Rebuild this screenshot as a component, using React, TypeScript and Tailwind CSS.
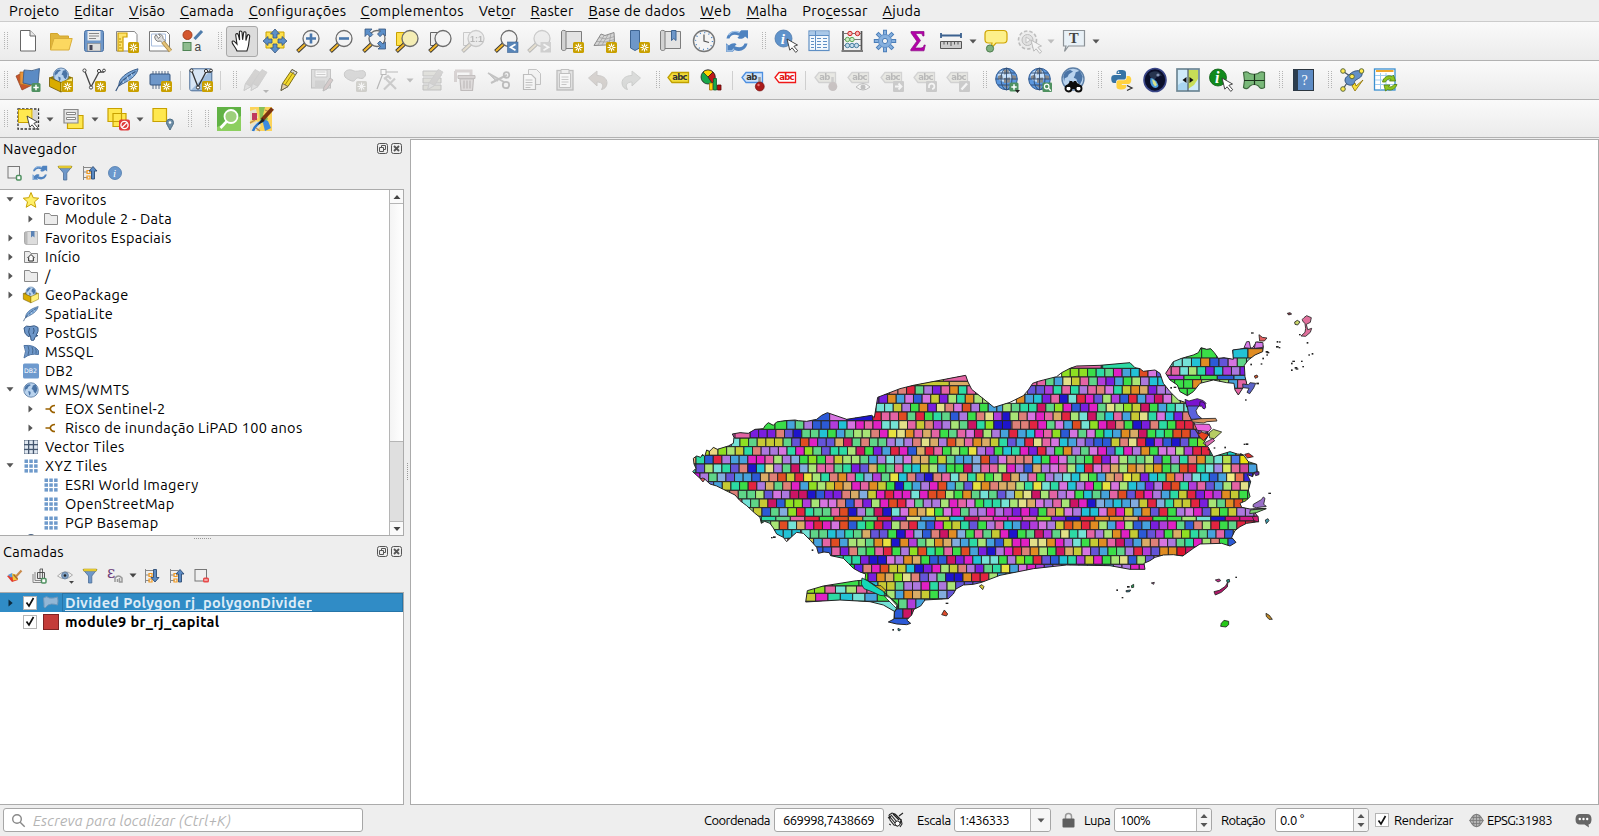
import React, { useLayoutEffect, useRef, useState } from "react";

/* ---------- text ---------- */

/** Text run set to a fixed advance width by distributing letter spacing. */
function T({ w, children, inner = "", className = "" }: { w: number; children: React.ReactNode; inner?: string; className?: string }) {
  const ref = useRef<HTMLSpanElement>(null);
  const [ls, setLs] = useState(0);
  useLayoutEffect(() => {
    const el = ref.current;
    if (!el) return;
    const n = (el.textContent || "").length;
    const natural = el.getBoundingClientRect().width;
    setLs((w - natural) / n);
  }, []);
  return (
    <span className={"block shrink-0 " + className} style={{ width: w }}>
      <span ref={ref} className={"inline-block whitespace-pre " + inner} style={{ letterSpacing: ls }}>
        {children}
      </span>
    </span>
  );
}

/* ---------- icons ---------- */

const S = ({ children, size = 24, dim = false }: { children: React.ReactNode; size?: number; dim?: boolean }) => (
  <svg
    width={size}
    height={size}
    viewBox={`0 0 ${size} ${size}`}
    fill="none"
    className={"shrink-0 overflow-visible " + (dim ? "opacity-30 saturate-[.35]" : "")}
  >
    {children}
  </svg>
);

const Star = ({ x = 13, y = 13 }: { x?: number; y?: number }) => (
  <g transform={`translate(${x} ${y})`}>
    <rect width="11" height="11" rx="1.6" fill="#c9a000" />
    <path d="M5.5 1.5v8M1.5 5.5h8M2.7 2.7l5.6 5.6M8.3 2.7l-5.6 5.6" stroke="#fff" strokeWidth="1.1" />
    <circle cx="5.5" cy="5.5" r="1" fill="#c9a000" />
  </g>
);
const Plus = ({ x = 15, y = 15 }: { x?: number; y?: number }) => (
  <g transform={`translate(${x} ${y})`}>
    <rect width="9" height="9" rx="1.5" fill="#4f9160" />
    <path d="M4.5 1.8v5.4M1.8 4.5h5.4" stroke="#fff" strokeWidth="1.5" />
  </g>
);
const Cursor = ({ x = 12, y = 10 }: { x?: number; y?: number }) => (
  <path
    transform={`translate(${x} ${y})`}
    d="M0 0l2.8 11.2 2.3-2.4 3.6 4.6 2-1.7-3.8-4.4 3.6-1.3z"
    fill="#fff"
    stroke="#333"
    strokeWidth=".9"
  />
);
const Lens = ({ children, fill = "#f3f3f3" }: { children?: React.ReactNode; fill?: string }) => (
  <>
    <path d="M10 14.5L1.5 22.5" stroke="#333" strokeWidth="3.8" />
    <path d="M9 15.5L2 22" stroke="#f0b62c" strokeWidth="2.2" />
    <circle cx="15" cy="9.5" r="8" fill={fill} stroke="#6b6b6b" strokeWidth="1.3" />
    {children}
  </>
);

const NewDoc = () => (
  <S>
    <path d="M4.5 1.5h9.5l5.5 5.5v15h-15z" fill="#fff" stroke="#666" />
    <path d="M14 1.5V7h5.5" fill="#e8e8e8" stroke="#666" />
  </S>
);
const OpenFolder = () => (
  <S>
    <path d="M1.5 21V4.5h7l2 2.5h9v4" fill="#e0b63c" stroke="#d2a52c" />
    <path d="M1.5 21L5 9.5h18.2L20 21z" fill="#fcd860" stroke="#d9ae3a" />
  </S>
);
const Save = () => (
  <S>
    <rect x="2.5" y="1.5" width="19" height="21" rx="2" fill="#6e97c9" stroke="#4c73a5" />
    <path d="M5.5 2h13v9.5h-13z" fill="#eee" />
    <path d="M7 4.5h10M7 7h10M7 9.5h7" stroke="#888" />
    <rect x="5.5" y="14.5" width="13" height="7.5" fill="#ddd" stroke="#888" strokeWidth=".6" />
    <rect x="7.5" y="16" width="3" height="5" fill="#445" />
  </S>
);
const Layout = () => (
  <S>
    <path d="M1.5 2.5h18l2.500 3v16.500h-20.500z" fill="#fff" stroke="#888" />
    <path d="M3 4h9v4H8v14H3z" fill="#ffe46b" stroke="#cf9f00" strokeWidth="1.2" />
    <path d="M4 10h2M4 13h3M4 16h2M4 19h3" stroke="#b58900" />
    <Star />
  </S>
);
const Wrench = () => (
  <S>
    <path d="M1.500 2.500h17l3 3v16.500h-20z" fill="#fff" stroke="#777" />
    <path d="M3.500 5h14v12h-14z" stroke="#a9bede" />
    <path d="M8 5.500a4 4 0 0 0 4.500 6.500l2 2 2.500-2.500-2-2.200A4 4 0 0 0 10.500 5l1.800 2.500-1.800 2z" fill="#ddd" stroke="#666" strokeWidth=".8" />
    <path d="M15 13l7.500 9" stroke="#a98a4a" strokeWidth="4" />
    <path d="M15 13l7.500 9" stroke="#e6c377" strokeWidth="2.400" />
  </S>
);
const Style = () => (
  <S>
    <circle cx="6.500" cy="6" r="4.500" fill="#d4572f" stroke="#a63f1d" />
    <path d="M13.500 10l7.500-8" stroke="#4e7cab" strokeWidth="3" />
    <rect x="2" y="13.500" width="8" height="8" fill="#8fbc8f" stroke="#4f8454" />
    <text x="13.500" y="21.500" fontSize="12" fontFamily="Liberation Sans" fill="#444">a</text>
  </S>
);
const Hand = () => (
  <S>
    <path
      d="M7 22c-1-3-4-6-4.800-8.300-.6-1.600 1.300-2.300 2.400-1L7 15.200 5.700 6c-.2-1.600 2-2 2.500-.4L9.600 11 9.400 3.200c0-1.700 2.400-1.700 2.600 0l.6 7.600 1-7c.2-1.500 2.400-1.300 2.400.3l-.1 7.400 1.500-5c.5-1.400 2.500-.9 2.300.6-.3 3-.7 5-1 8-.2 2.600-1.200 4.500-1.800 6.900z"
      fill="#fff"
      stroke="#222"
      strokeWidth="1.100"
    />
  </S>
);
const Pan = () => (
  <S>
    <path d="M3 3h18v16H3z" fill="#ffe14d" stroke="#c8a100" />
    <path
      d="M12 0l4.500 5h-2.500v4h-4V5H7.500zM12 24l4.500-5h-2.500v-4h-4v4H7.500zM0 12l5-4.500v2.500h4v4H5v2.500zM24 12l-5-4.500v2.500h-4v4h4v2.500z"
      fill="#5b8fc9"
      stroke="#38567d"
      strokeWidth=".8"
    />
  </S>
);
const ZoomIn = () => (
  <S><Lens><path d="M15 4.500v10M10 9.500h10" stroke="#4a78ad" strokeWidth="2.600" /></Lens></S>
);
const ZoomOut = () => (
  <S><Lens><path d="M10 9.500h10" stroke="#4a78ad" strokeWidth="2.600" /></Lens></S>
);
const ZoomFull = () => (
  <S>
    <Lens />
    <path d="M3 0h7L7.800 2.500l3 3-2.500 2.500-3-3L3 7.500zM23.500 0v7L21 4.700l-3 3L15.500 5l3-3L16.500 0zM23.500 20v-7L21 15l-3-3-2.500 2.500 3 3L16 20z" fill="#5b8fc9" stroke="#38567d" strokeWidth=".8" />
  </S>
);
const ZoomSel = () => (
  <S>
    <path d="M1.500 3.500h13v13h-13z" fill="#ffe14d" stroke="#c8a100" />
    <Lens fill="#f4edb5" />
  </S>
);
const ZoomLayer = () => (
  <S><path d="M2.500 3.500h13v13h-13z" fill="#eee" stroke="#666" /><Lens /></S>
);
const ZoomNative = () => (
  <S dim>
    <path d="M2.500 3.500h13v13h-13z" fill="#eee" stroke="#666" />
    <Lens fill="#ddd"><text x="9" y="13" fontSize="9" fontWeight="bold" fontFamily="Liberation Sans" fill="#333">1:1</text></Lens>
  </S>
);
const ZoomLast = () => (
  <S>
    <Lens />
    <rect x="13.500" y="13" width="10.500" height="10.500" fill="#5885b8" stroke="#3c6595" strokeWidth=".6" />
    <path d="M21.500 15.300L16.500 18.200l5 3" stroke="#fff" strokeWidth="1.700" />
  </S>
);
const ZoomNext = () => (
  <S dim>
    <Lens fill="#ddd" />
    <rect x="13.500" y="13" width="10.500" height="10.500" fill="#888" />
    <path d="M16.500 15.300l5 2.900-5 3" stroke="#fff" strokeWidth="1.700" />
  </S>
);
const MapView = ({ tail }: { tail: React.ReactNode }) => (
  <S>
    <path d="M4.500 2.500h17v17h-17z" fill="#e3e3e3" stroke="#7d7d7d" />
    <path d="M1.500 2.500c0-1.500 4.500-1.500 4.500 0v17.500c0 2-4.500 2-4.500 0z" fill="#d2d2d2" stroke="#7d7d7d" />
    {tail}
  </S>
);
const Map3D = () => (
  <S>
    <path d="M1 16.500L8 5l4 1.500L21 3.500l.5 9-9 3.500z" fill="#d6d6d6" stroke="#8a8a8a" />
    <path d="M3.500 12.500l9 .5 9-2.500M6 8.500l7 1.500 8.500-2.500M5 16l6.500-10M9 16l6.500-11M16 15l2-10.500" stroke="#999" strokeWidth=".7" />
    <Star />
  </S>
);
const NewBookmark = () => (
  <S>
    <path d="M4.500 1.500h9v17.500l-4.500 2.500-4.500-2.500z" fill="#6e97c9" stroke="#3f6593" />
    <Star />
  </S>
);
const Clock = () => (
  <S>
    <circle cx="12" cy="12" r="10.500" fill="#f4f4f4" stroke="#777" strokeWidth="1.400" />
    <circle cx="12" cy="12" r="8.500" stroke="#4a84c4" strokeWidth="1.400" strokeDasharray="1 3.450" />
    <path d="M12 5.500V12l5 1.500" stroke="#555" strokeWidth="1.200" />
  </S>
);
const RefreshShape = () => (
  <>
    <path d="M1.500 9.500C3 3 9 .5 14.500 3l1.800-1.800H23v8.600L20 7.500c-1 1.500-2.500 2.500-6 2.300l-1.600-1 2-2C9 4.500 5.500 6 4.500 9.500z" fill="#4f83c0" />
    <path d="M3.500 6C6 2.600 10.500 1.600 14.500 3.600" stroke="#a5c5e8" strokeWidth="1.400" />
    <path d="M22.500 14.500C21 21 15 23.500 9.500 21l-1.800 1.800H1v-8.600L4 16.500c1-1.500 2.500-2.500 6-2.300l1.600 1-2 2c5.400 2.300 8.900.8 9.900-2.700z" fill="#4f83c0" />
    <path d="M2 15.500v6.300h5l2.200-2" stroke="#a5c5e8" strokeWidth="1.200" />
  </>
);
const Refresh = () => <S><RefreshShape /></S>;
const Identify = () => (
  <S>
    <circle cx="9.500" cy="9.500" r="8.500" fill="#5f93cb" stroke="#4c78ab" strokeWidth=".8" />
    <text x="6.800" y="15" fontSize="15" fontStyle="italic" fontWeight="bold" fontFamily="Liberation Serif" fill="#fff">i</text>
    <Cursor x={13} y={10} />
  </S>
);
const Table = () => (
  <S>
    <rect x="2" y="2" width="20" height="19.500" fill="#f4f9fd" stroke="#5f8fc4" strokeWidth="1.200" />
    <path d="M2.600 2.600h18.800v4H2.600z" fill="#a9c8e8" />
    <path d="M2 6.500h20M8.500 2v19.500" stroke="#5f8fc4" />
    <path d="M4 9.500h3M4 12.500h3M4 15.500h3M4 18.500h3M10 9.500h4M16 9.500h4M10 12.500h4M16 12.500h4M10 15.500h4M16 15.500h4M10 18.500h4M16 18.500h4" stroke="#5f8fc4" />
  </S>
);
const Abacus = () => (
  <S>
    <path d="M3 2v19M21.500 2v19M1.500 22h21.500" stroke="#555" strokeWidth="1.700" />
    <path d="M3 4.500h18M3 10.500h18M3 16.500h18" stroke="#777" />
    <circle cx="10" cy="4.500" r="2.200" fill="#f6b9b9" stroke="#c22" />
    <circle cx="17.500" cy="4.500" r="2.200" fill="#f6b9b9" stroke="#c22" />
    <circle cx="7.500" cy="10.500" r="2.200" fill="#cdebc8" stroke="#5fa758" />
    <circle cx="12" cy="10.500" r="2.200" fill="#cdebc8" stroke="#5fa758" />
    <circle cx="7.500" cy="16.500" r="2.200" fill="#c6dceb" stroke="#487fa0" />
    <circle cx="12" cy="16.500" r="2.200" fill="#c6dceb" stroke="#487fa0" />
    <circle cx="16.500" cy="16.500" r="2.200" fill="#c6dceb" stroke="#487fa0" />
  </S>
);
const Gear = () => (
  <S>
    <path d="M12 .8v22.400M.8 12h22.400M4.100 4.100l15.800 15.800M19.900 4.100L4.100 19.900" stroke="#4a7db8" strokeWidth="4" />
    <path d="M12 1.800v20.400M1.800 12h20.400M4.800 4.800l14.400 14.400M19.200 4.800L4.800 19.200" stroke="#86b0de" strokeWidth="2.200" />
    <circle cx="12" cy="12" r="6.500" fill="#86b0de" stroke="#5f8fc7" />
    <circle cx="12" cy="12" r="2.600" fill="#f5f5f5" stroke="#4a7db8" />
  </S>
);
const Sigma = () => (
  <S>
    <path d="M5 2.500h13v4.500h-1.200c-.4-2-1-2.500-3-2.500H9.500l5 7-5.500 7.500h5.500c2.200 0 3-.8 3.600-3h1.200L18 21.800H4.800v-1.300l6-8.300-5.800-8.200z" fill="#b400a8" stroke="#8a0d84" strokeWidth=".7" />
  </S>
);
const Ruler = () => (
  <S>
    <path d="M2 6.500h20M2 4v5M22 4v5" stroke="#3b618f" strokeWidth="1.800" />
    <path d="M1.500 12.500h21v7h-21z" fill="#ccc" stroke="#555" />
    <path d="M5 12.500v3M8.500 12.500v3M12 12.500v4.500M15.500 12.500v3M19 12.500v3" stroke="#555" />
  </S>
);
const MapTip = () => (
  <S>
    <path d="M4.500 1.500h15q3.500 0 3.500 3.500v5.500q0 3.500-3.500 3.500H12l-5 5.500 1-5.500H4.500Q1 14 1 10.500V5q0-3.500 3.500-3.500z" fill="#fdf08a" stroke="#cfa400" strokeWidth="1.200" />
    <circle cx="6" cy="19.500" r="3.600" fill="#7fb07f" stroke="#4d7d4d" />
  </S>
);
const Action = () => (
  <S dim>
    <circle cx="10.500" cy="11" r="9" fill="#ddd" stroke="#444" strokeWidth="1.600" strokeDasharray="3.500 2" />
    <circle cx="10.500" cy="11" r="5.500" fill="#bbb" stroke="#444" />
    <path d="M9 8l4.500 3L9 14z" fill="#fff" stroke="#555" />
    <Cursor x={14} y={11} />
  </S>
);
const TextNote = () => (
  <S>
    <path d="M1.500 1.500h21v15.500h-16L2.500 22.500 4 17H1.500z" fill="#e9f1f7" stroke="#8c9297" strokeWidth="1.200" />
    <text x="7" y="14" fontSize="14.500" fontWeight="bold" fontFamily="Liberation Serif" fill="#444">T</text>
  </S>
);

const DataSource = () => (
  <S>
    <path d="M0 8l8-4 6 14-8 4z" fill="#c8562b" stroke="#8f3b1b" strokeWidth=".7" />
    <path d="M4 4l11 0 0 14-11-2z" fill="#e8943a" stroke="#b26b20" strokeWidth=".7" />
    <path d="M8 2q8 2 15.500-1.500L22 16q-7 2-15-1z" fill="#5b8bc4" stroke="#34557f" strokeWidth=".8" />
    <Plus x={15.500} y={15} />
  </S>
);
const GlobeShape = ({ cx, cy, r }: { cx: number; cy: number; r: number }) => (
  <g transform={`translate(${cx} ${cy}) scale(${r / 8})`}>
    <circle r="8" fill="#b9d3ee" stroke="#5d7fa6" strokeWidth="1" />
    <path d="M-7-2c1-3 2-4 5-4.500l2 1-3 2-1 2-2 1-.5 2.500zM2-5l3-1 2 4-.5 3-1.500 3-2-2-.5-2-2-1 1-2zM-3 1l2.500 1 0 2.500-1.500 2z" fill="#4a74a6" />
  </g>
);
const GeoPkgShape = () => (
  <>
    <path d="M.5 9.500L12 5l11.500 4.500L12 14z" fill="#8f7400" />
    <GlobeShape cx={12} cy={7.500} r={7.500} />
    <path d="M.5 9.500L12 14.500V24L.5 18.500z" fill="#d9ac00" stroke="#6b5300" strokeWidth=".8" />
    <path d="M23.500 9.500L12 14.500V24l11.500-5.500z" fill="#fff07a" stroke="#8f7400" strokeWidth=".8" />
  </>
);
const GeoPkg = () => <S><GeoPkgShape /><Star /></S>;
const VNodes = ({ c = "#555" }: { c?: string }) => (
  <>
    <path d="M3 3.500l6 15.500L17 4l5 0" stroke={c} strokeWidth="1.300" />
    <circle cx="2.500" cy="2.500" r="1.600" fill="#fff" stroke={c} />
    <circle cx="9" cy="19.500" r="1.600" fill="#fff" stroke={c} />
    <circle cx="17" cy="3" r="1.600" fill="#fff" stroke={c} />
    <circle cx="22" cy="2.500" r="1.400" fill="#fff" stroke={c} />
  </>
);
const NewVector = () => <S><VNodes c="#444" /><Star /></S>;
const FeatherShape = () => (
  <>
    <path d="M4 18C3 11 11 4 23 .8 22 6 18 11 7 16z" fill="#7aa7d8" stroke="#3f618d" />
    <path d="M.8 23C4 15 12 8 20.500 3.500" stroke="#35557e" strokeWidth="1.200" />
    <path d="M8 12.500L8.500 15M12 8.500l1.500 4M16 5.500l1.500 3" stroke="#dbe8f5" strokeWidth=".8" />
  </>
);
const Feather = () => <S><FeatherShape /><Star /></S>;
const Chip = () => (
  <S>
    <path d="M5 3v18M8 3v18M11 3v18M14 3v18M17 3v18M20 3v14" stroke="#5b6f8a" strokeWidth="1" />
    <rect x="2" y="6" width="20" height="11" rx="1" fill="#6e97c9" stroke="#34557f" />
    <Star />
  </S>
);
const VBox = () => (
  <S>
    <rect x=".8" y=".8" width="22" height="22" rx="2" fill="#9fbddd" stroke="#4a6c96" />
    <path d="M1.500 1.500h21L1.500 22.500z" fill="#d8e6f4" />
    <VNodes c="#333" />
    <Star />
  </S>
);
const PencilShape = ({ x = 0 }: { x?: number }) => (
  <g transform={`translate(${x} 0)`}>
    <path d="M4 22.500l1.500-7L15 1.500l5 2.800L11 18.500z" fill="#f3d931" stroke="#726000" strokeWidth=".9" />
    <path d="M15 1.500l5 2.800-1.500 2.500-5-2.800z" fill="#d9d9d9" stroke="#555" strokeWidth=".8" />
    <path d="M4 22.500l1.500-7 5.500 3z" fill="#e5cfa6" stroke="#555" strokeWidth=".8" />
    <path d="M8 17L16.500 4" stroke="#a78b00" />
  </g>
);
const GreyPencil = ({ x = 0 }: { x?: number }) => (
  <g transform={`translate(${x} 0)`}>
    <path d="M4 22.500l1.500-7L15 1.500l5 2.800L11 18.500z" fill="#8d8580" stroke="#777" strokeWidth=".9" />
    <path d="M4 22.500l1.500-7 5.500 3z" fill="#bbb" stroke="#777" strokeWidth=".8" />
  </g>
);
const Pencils = () => (
  <S dim>
    <GreyPencil x={-4} />
    <GreyPencil x={3} />
    <path d="M19 22h6l-3 3z" fill="#333" />
  </S>
);
const PencilIcon = () => <S><PencilShape /></S>;
const SaveEdits = () => (
  <S dim>
    <rect x="1.500" y="1.500" width="19" height="18.500" fill="#aaa" stroke="#555" />
    <path d="M5 2h12v7H5z" fill="#fff" stroke="#666" />
    <path d="M6.500 4h9M6.500 6.500h9" stroke="#777" />
    <path d="M5 12.500h10v7.500H5z" fill="#888" />
    <path d="M13 23l1-4 6-9 3 2-6 9z" fill="#c66" stroke="#444" />
  </S>
);
const AddPoly = () => (
  <S dim>
    <path d="M2 9c-3-6 4-9 9-6 4 1 9-2 11 1 2 4-2 8-6 6-4-1-3 4-7 3-3-1-5-2-7-4z" fill="#999" stroke="#666" />
    <g transform="translate(13 13)">
      <rect width="11" height="11" rx="1.600" fill="#8d8a60" />
      <path d="M5.500 1.500v8M1.500 5.500h8M2.700 2.700l5.600 5.600M8.300 2.700l-5.600 5.600" stroke="#fff" strokeWidth="1.100" />
    </g>
  </S>
);
const Vertex = () => (
  <S dim>
    <rect x="5" y="1.500" width="5" height="5" fill="#fff" stroke="#333" />
    <path d="M10 4h12M6.500 6.500L1 21" stroke="#333" strokeWidth="1.200" />
    <path d="M8 21.500L19 10.500M10 11l10 10M8 11l4-3 3 3" stroke="#777" strokeWidth="2.200" />
  </S>
);
const MultiEdit = () => (
  <S dim>
    <path d="M2 3h18v5H2zM2 10h18v5H2zM2 17h18v5H2z" fill="#b5b58a" stroke="#555" />
    <g transform="translate(3 0) scale(.95)"><GreyPencil /></g>
  </S>
);
const Trash = () => (
  <S dim>
    <path d="M1 3h16v4M1.500 3v11" stroke="#b08080" strokeWidth="3" />
    <path d="M4 7.500h17v3H4z" fill="#a88" stroke="#644" />
    <path d="M6 11h13.500l-1 11.500H7z" fill="#c7aaaa" stroke="#644" strokeWidth="1.200" />
    <path d="M10 12.500v8M13 12.500v8M16 12.500v8" stroke="#644" strokeWidth="1.300" />
  </S>
);
const Cut = () => (
  <S dim>
    <path d="M1 5l16 9M4 15L20 7" stroke="#555" strokeWidth="2" />
    <circle cx="19.500" cy="7" r="2.800" stroke="#444" strokeWidth="1.800" />
    <circle cx="19" cy="17" r="3.200" stroke="#444" strokeWidth="1.800" />
    <path d="M1 5l10 8-3-1z" fill="#777" stroke="#555" />
  </S>
);
const Copy = () => (
  <S dim>
    <path d="M8.500 1.500h8l4 4v11h-12z" fill="#eee" stroke="#555" />
    <path d="M3.500 6.500h8l4 4v11h-12z" fill="#fff" stroke="#444" strokeWidth="1.200" />
    <path d="M5.500 12h7M5.500 14.500h7M5.500 17h7M5.500 19.500h5" stroke="#555" />
  </S>
);
const Paste = () => (
  <S dim>
    <rect x="4" y="2.500" width="16" height="19.500" fill="#bbb" stroke="#444" strokeWidth="1.300" />
    <path d="M6.500 5.500h11v14h-11z" fill="#fff" stroke="#555" />
    <path d="M8 1.500h8v4H8z" fill="#ddd" stroke="#444" />
    <path d="M8.500 9h7M8.500 11.500h7M8.500 14h7M8.500 16.500h5" stroke="#666" />
  </S>
);
const Undo = () => (
  <S dim>
    <path d="M2.500 10L11 3v4.500c6 0 10 3 10 7.500 0 3.500-2.500 6-5.500 6.500 2.500-4 1-7.500-4.500-7.500V18z" fill="#a8836a" stroke="#7d6a5c" />
  </S>
);
const Redo = () => (
  <S dim>
    <path d="M21.500 10L13 3v4.500c-6 0-10 3-10 7.500 0 3.500 2.500 6 5.500 6.500-2.500-4-1-7.500 4.500-7.500V18z" fill="#9aa89a" stroke="#6f7d6f" />
  </S>
);
const Tag = ({ fill, stroke, color, text = "abc" }: { fill: string; stroke: string; color: string; text?: string }) => (
  <>
    <path d="M1 9.500L5 4.500h16.500v10H5z" fill={fill} stroke={stroke} strokeWidth="1.300" />
    <text x="5.200" y="12.300" fontSize="8.500" fontWeight="bold" fontFamily="DejaVu Sans" letterSpacing="-.7" fill={color}>{text}</text>
  </>
);
const AbcYellow = () => <S><Tag fill="#f3dd3a" stroke="#c0a000" color="#333" /></S>;
const Diagram = () => (
  <S>
    <circle cx="8" cy="9" r="7" fill="#18a849" stroke="#222" strokeWidth=".8" />
    <path d="M8 9L3 4a7 7 0 0 1 10 0z" fill="#ffd500" stroke="#222" strokeWidth=".7" />
    <path d="M8 9l5-5a7 7 0 0 1-1 11z" fill="#c01818" stroke="#222" strokeWidth=".7" />
    <path d="M9.500 15h3v7h-3z" fill="#ffd500" stroke="#a66d00" strokeWidth=".8" />
    <path d="M13.500 10.500h3V22h-3z" fill="#18a849" stroke="#0b6128" strokeWidth=".8" />
    <path d="M17.500 17h3.500v5h-3.500z" fill="#b01111" stroke="#5d0909" strokeWidth=".8" />
  </S>
);
const AbPin = () => (
  <S>
    <Tag fill="#cfe3fa" stroke="#4d8fe0" color="#333" text="ab" />
    <path d="M18.500 9v9" stroke="#999" strokeWidth="2.500" />
    <circle cx="18.800" cy="18.500" r="4.500" fill="#aa1b1b" stroke="#6d1010" strokeWidth=".6" />
    <circle cx="17.500" cy="17" r="1.200" fill="#e77" />
  </S>
);
const AbcRed = () => <S><Tag fill="#fff" stroke="#f01818" color="#e01010" /></S>;
const DimTag = ({ k }: { k: number }) => (
  <S dim>
    <Tag fill="#cfcfa5" stroke="#888" color="#333" text={k === 0 ? "ab" : "abc"} />
    {k === 0 && <><path d="M18.500 9v8" stroke="#777" strokeWidth="2.500" /><circle cx="18.800" cy="18.500" r="4.500" fill="#855" /></>}
    {k === 1 && <><path d="M9 19q7-7 14 0-7 6-14 0z" fill="#fff" stroke="#444" /><circle cx="16" cy="19" r="2.500" fill="#555" /></>}
    {k > 1 && <rect x="13" y="13" width="11" height="11" rx="1" fill="#777" />}
    {k === 2 && <path d="M15 18.500h6M18.500 15.500l3 3-3 3" stroke="#fff" strokeWidth="1.800" />}
    {k === 3 && <path d="M16 20v-2a2.700 2.700 0 1 1 3 3" stroke="#fff" strokeWidth="1.700" />}
    {k === 4 && <path d="M15.500 21.500l5.500-6" stroke="#fff" strokeWidth="2.400" />}
  </S>
);
const WireGlobe = ({ children }: { children?: React.ReactNode }) => (
  <S>
    <circle cx="11.500" cy="11" r="10.800" fill="#5b97de" stroke="#3a6298" />
    <ellipse cx="10" cy="8" rx="7.500" ry="6" fill="#c5dffa" />
    <path d="M8.500 1.500h5l.5 4-5 1zM3 8l4-1.500 1 4-5 1zM9 10l6-.5v5L9 15zM17 7l4 1v4l-4-1zM7.500 17l6 .5-1 3.500z" fill="#8a8a8a" />
    <path d="M11.500 0v22M.7 11h21.600M3 5h17M3 17h17" stroke="#2f4d74" strokeWidth=".9" />
    <ellipse cx="11.500" cy="11" rx="5.500" ry="10.800" stroke="#2f4d74" strokeWidth=".9" />
    {children}
  </S>
);
const GlobeAdd = () => <WireGlobe><Plus x={14.500} y={14.500} /><path d="M20 22h5l-2.500 3z" fill="#222" /></WireGlobe>;
const GlobeFind = () => (
  <WireGlobe>
    <rect x="14.500" y="14.500" width="9.500" height="9.500" rx="1" fill="#4f9160" />
    <circle cx="18.700" cy="18.500" r="2.300" stroke="#fff" strokeWidth="1.200" /><path d="M20.500 20.300l2.300 2.500" stroke="#fff" strokeWidth="1.300" />
  </WireGlobe>
);
const GlobeBino = () => (
  <S>
    <GlobeShape cx={12} cy={11} r={11} />
    <path d="M5 21l4-8h2l1 1.500L13 13h2l4.500 8z" fill="#0d0d0d" />
    <circle cx="7.500" cy="20.500" r="3" fill="#fff" stroke="#0d0d0d" strokeWidth="1.900" />
    <circle cx="17.500" cy="20.500" r="3" fill="#fff" stroke="#0d0d0d" strokeWidth="1.900" />
    <path d="M4.500 19h16l-3-3.500h-10z" fill="#0d0d0d" />
  </S>
);
const Python = () => (
  <S>
    <path d="M11 2c4 0 5 1 5 3v4c0 2-1 2.500-2.500 2.500h-5C6.500 11.500 6 13 6 15H4c-2 0-2.800-2-2.800-4.500S2.500 7 4.500 7H11v-1H6.500V4.500C6.500 2.500 8.500 2 11 2z" fill="#3673a5" />
    <circle cx="8.500" cy="4.200" r=".8" fill="#fff" />
    <path d="M11.500 21.500c-4 0-5-1-5-3V15c0-2 1-2.700 2.500-2.700h5c2 0 2.700-1.300 2.700-4.300h1.800c2 0 2.800 2 2.800 4s-1 4-3 4h-6.500v1h4.500v1.500c0 2-2 3-4.800 3z" fill="#ffd23f" />
    <path d="M17 17.500l5 2.500-5 2.500" stroke="#333" strokeWidth="1.300" />
  </S>
);
const Earth = () => (
  <S>
    <ellipse cx="12" cy="12" rx="11" ry="11.500" fill="#0a0f2a" stroke="#3a4688" strokeWidth="1.600" />
    <path d="M6 6C9 2 17 2 19 8c-3-1-5 0-7 3S7 9 6 6z" fill="#26344f" />
    <path d="M7.500 10c3 0 7 3 8 8-1 2-3 2.500-5 1.500-3-2-4-5.500-3-9.500z" fill="#4b9bdc" />
    <path d="M9 11l3 2 2 4-2 1.500-2-3z" fill="#d9e28a" />
    <circle cx="15" cy="7" r="1.600" fill="#8494b5" />
  </S>
);
const Swipe = () => (
  <S>
    <rect x="1" y="1" width="22" height="22" fill="#cfeaf9" stroke="#6d8694" strokeWidth="1.700" />
    <path d="M12 2h10v9l-4 6-6 4z" fill="#c7dd57" />
    <path d="M2 17q5-5 10-1v6H2z" fill="#a9d5f0" />
    <path d="M12 1v22" stroke="#567" strokeWidth="1.300" />
    <path d="M6.500 12l4-3v6zM17.500 12l-4-3v6z" fill="#111" />
  </S>
);
const InfoGreen = () => (
  <S>
    <circle cx="9" cy="9.500" r="8.500" fill="#118a1c" stroke="#0a5c12" strokeWidth=".8" />
    <text x="6" y="15" fontSize="16" fontStyle="italic" fontWeight="bold" fontFamily="Liberation Serif" fill="#fff">i</text>
    <Cursor x={13} y={10} />
  </S>
);
const Bowtie = () => (
  <S>
    <path d="M1.500 4.500q4-1.500 6 1 4.500 1.500 8.500 0Q18.500 3 22.500 4.500v15q-4 2.500-6-1.500-4.500-3-8.500 0-3 4.500-6.500 1.500l1-7z" fill="#7ab97a" stroke="#3f6a3f" strokeWidth="1.200" />
    <path d="M2 12.500h20.500M12.500 6v11" stroke="#1c331c" strokeWidth="1.200" />
  </S>
);
const HelpBook = () => (
  <S>
    <rect x="2.500" y="1.500" width="20" height="21" fill="#5e8cc5" stroke="#2c3640" />
    <path d="M2.500 1.500h4.500v21H2.500z" fill="#2c3e50" />
    <text x="10.500" y="17" fontSize="14" fontFamily="Liberation Serif" fill="#fff">?</text>
  </S>
);
const TopoCheck = () => (
  <S>
    <path d="M2.500 3l9 6L22 3M3 21l8-12" stroke="#4a5560" strokeWidth="1.300" />
    <path d="M10 6c4-4 10-4 12-2 1 5-3 6-6 8s0 4-4 5-7-2-7-5 3-4 5-6z" fill="#6490c6" stroke="#34557f" />
    <path d="M12 18l3 5L23 12l-7 6-1-3z" fill="#f7df3c" stroke="#8a6d00" strokeWidth=".8" />
    <g fill="#ffe94d" stroke="#5c6a3a">
      <circle cx="3" cy="3" r="2.300" /><circle cx="21.500" cy="3" r="2.300" /><circle cx="12" cy="8.500" r="2.300" /><circle cx="3" cy="21" r="2.300" />
    </g>
  </S>
);
const TableSync = () => (
  <S>
    <rect x="1.500" y="1" width="20.500" height="21" fill="#fff" stroke="#3a8fd0" strokeWidth="1.300" />
    <path d="M3 3h17.500" stroke="#f0a830" strokeWidth="2" />
    <path d="M2 7.500h19.500M2 12h19.500M2 16.500h19.500M7.500 5v16.500M13 5v16.500" stroke="#9fcdf0" />
    <path d="M9.500 14c1-5 6-7.500 9.500-5.500l1.500-1.500L22.500 13h-6l1.500-1.700c-2.500-.8-4.500.4-5.500 2.700z" fill="#8cc520" stroke="#4f7d0b" strokeWidth=".8" />
    <path d="M24 16.500c-1.500 4.500-6 6.500-9.500 5l-2 1.500-1.500-6h6l-1.500 1.700c2.500.7 4.500-.4 5.500-2.200z" fill="#8cc520" stroke="#4f7d0b" strokeWidth=".8" />
  </S>
);

const Sel = () => (
  <S>
    <path d="M2 2h20.500v20H2z" stroke="#333" strokeWidth="1.300" strokeDasharray="2.500 1.500" />
    <path d="M17 3h5v13h-5z" fill="#d6d6d6" />
    <path d="M2.500 2.500h13.500v13H2.500z" fill="#ffe84f" stroke="#c8a100" />
    <Cursor x={11} y={9} />
  </S>
);
const SelForm = () => (
  <S>
    <path d="M6.500 8.500h15.500v13H6.500z" fill="#ffe84f" stroke="#c8a100" strokeWidth="1.200" />
    <path d="M3 2.500h14v13.500H3z" fill="#e4e4e4" stroke="#888" strokeWidth="1.200" />
    <path d="M5.500 5.500h9v2h-9zM5.500 10.500h9v2h-9z" fill="#fff" stroke="#888" />
  </S>
);
const Deselect = () => (
  <S>
    <path d="M2 1.500h13.500v13H2zM7 6.500h13v13H7z" fill="#ffe84f" stroke="#c8a100" strokeWidth="1.200" />
    <rect x="13" y="12.500" width="11" height="11" rx="2" fill="#e03a3a" />
    <circle cx="18.500" cy="18" r="3.600" stroke="#fff" strokeWidth="1.300" /><path d="M16 20.500l5-5" stroke="#fff" strokeWidth="1.300" />
  </S>
);
const SelLoc = () => (
  <S>
    <path d="M2 1.500h13.500v13H2z" fill="#ffe84f" stroke="#c8a100" strokeWidth="1.200" />
    <path d="M19 23c-2-4-3.500-5.500-3.500-7.500a3.500 3.500 0 0 1 7 0c0 2-1.500 3.500-3.500 7.500z" fill="#6e8fa8" stroke="#4c6b83" />
    <circle cx="19" cy="15.500" r="1.300" fill="#fff" />
  </S>
);
const OsmFind = () => (
  <S>
    <rect width="24" height="24" fill="#8ccf5f" /><path d="M0 0h24v9L0 20z" fill="#4fa53a" opacity=".7" />
    <circle cx="14" cy="9.500" r="6.500" fill="#9dd07c" stroke="#fff" strokeWidth="1.800" /><path d="M9.500 14.500L3.500 21" stroke="#fff" strokeWidth="2.600" />
  </S>
);
const OsmMap = () => (
  <S>
    <rect width="22" height="24" fill="#fbd35a" />
    <path d="M0 4l6-2 2 9-8 3zM0 17l7-3 4 5-5 5H0z" fill="#e7e2d0" />
    <path d="M2 6h5v7H2z" fill="#c0395e" /><path d="M9 0h6l-2 8 5 3-2 6-6-2z" fill="#88c057" />
    <path d="M12 12l6 2 3 7-6 3z" fill="#3c8be0" /><path d="M3 24c2-7 8-9 12-12" stroke="#2d78d0" strokeWidth="2.600" />
    <path d="M0 16l5-3M6 21l4 3M15 3l5 2" stroke="#b85" strokeWidth="1.200" />
    <path d="M22.500 1.500L12 13" stroke="#7c3410" strokeWidth="4" /><path d="M12.500 11l2 3-7 4z" fill="#222" />
  </S>
);

/* 16px icons */
const sq = (n: number) => Array.from({ length: n });
const FolderI = ({ home = false }: { home?: boolean }) => (
  <S size={16}>
    <path d="M1.500 13.500V2.500h5l1.500 2h6.500v9z" fill="#ececec" stroke="#888" />
    {home && <path d="M4.500 9L8 5.500 11.500 9M5.700 8.500v3.500h4.600V8.500" fill="#fff" stroke="#222" />}
  </S>
);
const StarI = () => (
  <S size={16}>
    <path d="M8 .5l2.200 5.200 5.500.5-4.200 3.600 1.300 5.500L8 12.400l-4.800 2.900 1.300-5.500L.3 6.200l5.500-.5z" fill="#fff06a" stroke="#c9a200" />
  </S>
);
const BookI = () => (
  <S size={16}>
    <path d="M1.500 2.500q1.500-1.500 3 0v12q-3 0-3-2z" fill="#bbb" stroke="#aaa" />
    <path d="M4 1.500h10.500v13H4z" fill="#ddd" stroke="#bbb" /><path d="M8 1h3.500v6.500L9.800 6 8 7.500z" fill="#5b83b5" />
  </S>
);
const Scaled = ({ children }: { children: React.ReactNode }) => (
  <S size={16}><g transform="scale(.66)">{children}</g></S>
);
const Elephant = () => (
  <S size={16}>
    <path d="M1 3q2-3 6-1.500Q12-.5 15 2.500q1 4-2 8h2l-3 1.500-1 3q-1.500 1-3 0l-.5-4-2.500.5Q1 9 1 3z" fill="#6e97c9" stroke="#3c5c86" />
    <path d="M6.500 3q-2 4 .5 8M10.500 3q1.500 3-.5 6" stroke="#34557f" />
  </S>
);
const MssqlI = () => (
  <S size={16}>
    <path d="M1 1.500q10-1 14.500 5l0 4Q7 9 1 14q3-7 0-12.500z" fill="#6e97c9" stroke="#4f74a3" />
    <path d="M5 2q2 4 0 9M9 3q1.500 3 .5 6.500M12.500 4.500q1 2 .5 5" stroke="#46688f" />
  </S>
);
const Db2I = () => (
  <S size={16}>
    <rect width="16" height="15" rx="1.500" y=".5" fill="#6e9ace" />
    <text x="1" y="10.300" fontSize="6.200" fontFamily="DejaVu Sans" fill="#fff">DB2</text>
  </S>
);
const WmsI = () => <S size={16}><GlobeShape cx={8} cy={8} r={7.200} /></S>;
const ForkI = () => (
  <S size={16}>
    <path d="M2.500 8H7M12 4.500Q8 4.500 7.200 8q.8 3.500 4.800 3.500" stroke="#9a6100" strokeWidth="1.700" />
  </S>
);
const GridI = ({ dark = false }: { dark?: boolean }) => (
  <S size={16}>
    {dark && <rect x="1" y="1" width="14" height="14" fill="#44566e" />}
    {sq(9).map((_, i) => (
      <rect key={i} x={1.500 + (i % 3) * 4.800} y={1.500 + Math.floor(i / 3) * 4.800} width="3.500" height="3.500" fill={dark ? "#dfe7f0" : "#6e9acb"} />
    ))}
  </S>
);
const AddLayerI = ({ minus = false }: { minus?: boolean }) => (
  <S size={16}>
    <rect x="1" y="1.500" width="11.500" height="11.500" fill="#f0f0f0" stroke="#777" />
    {minus ? (
      <><rect x="9" y="9.500" width="6" height="5" rx="1.500" fill="#e84a4a" /><path d="M10.300 12h3.400" stroke="#fff" /></>
    ) : (
      <rect x="9.500" y="10.500" width="4.500" height="4.500" rx="1" fill="#fff" stroke="#4f9160" strokeWidth="1.500" />
    )}
  </S>
);
const FunnelI = () => (
  <S size={16}>
    <path d="M1 1.500h14L9.800 8v7H6.500V8z" fill="#6e97c9" stroke="#4a6c96" strokeWidth=".8" />
    <path d="M1.500 1h13v2h-13z" fill="#f5dc3c" stroke="#b89b10" strokeWidth=".6" />
  </S>
);
const TreeArrow = ({ down = false }: { down?: boolean }) => (
  <S size={16}>
    <path d="M1.500 1v14M1.500 2.500h8M1.500 7h4M1.500 12.500h4" stroke="#888" />
    <path d="M5 5.500h3v3H5zM5 11h3v3H5z" stroke="#f39a1e" strokeWidth="1.200" />
    {down ? (
      <path d="M9.500 1.500h3v8H15L11 14 7 9.500h2.500z" fill="#5b8bc4" stroke="#2d4c74" strokeWidth=".9" />
    ) : (
      <path d="M9.500 14h3V6H15L11 1.500 7 6h2.500z" fill="#5b8bc4" stroke="#2d4c74" strokeWidth=".9" />
    )}
  </S>
);
const InfoI = () => (
  <S size={16}>
    <circle cx="8" cy="8" r="6.500" fill="#6b98cc" stroke="#4c78ab" strokeWidth=".8" />
    <text x="6" y="12" fontSize="11" fontStyle="italic" fontFamily="Liberation Serif" fill="#fff">i</text>
  </S>
);
const BrushI = () => (
  <S size={16}>
    <path d="M0 8l5-2 5 3 1 3-6 2z" fill="#e23c2e" /><path d="M1 7l4-2 2 3-3 1.500z" fill="#5a9bdc" /><path d="M5 5.500l4 1 2 5-5 1z" fill="#f3c83a" />
    <path d="M6.500 6.500l4 4.500" stroke="#a0662d" strokeWidth="1.200" /><path d="M9 8.500l5.500-6" stroke="#c98a4a" strokeWidth="2.200" />
  </S>
);
const GroupI = () => (
  <S size={16}>
    <path d="M1 6v8.500h9M3 4v8.500h9" stroke="#888" /><path d="M5.500 4.500h7v6h-7z" fill="#e8e8e8" stroke="#555" />
    <path d="M8 1v9M10.500 1v9M8 1h3" stroke="#444" strokeWidth=".8" />
    <rect x="9.500" y="10.500" width="4.500" height="4.500" rx="1" fill="#fff" stroke="#4f9160" strokeWidth="1.500" />
  </S>
);
const EyeI = () => (
  <S size={16}>
    <path d="M.5 8Q8 0 15.500 7 8 14 .5 8z" fill="#f2f2f2" stroke="#aaa" /><circle cx="8" cy="7.500" r="3.400" fill="#7e9fc2" stroke="#6c87a6" /><circle cx="8" cy="7.500" r="1.300" fill="#222" />
    <path d="M12 13h5l-2.500 2.700z" fill="#444" />
  </S>
);
const EpsI = () => (
  <S size={16}>
    <text x="0" y="10" fontSize="16" fontFamily="DejaVu Serif" fill="#6b3a78">ε</text>
    <path d="M8 14V10q3.500-4 7 0v4h-2.500v-4M10.500 14v-3" stroke="#999" strokeWidth="1.500" />
  </S>
);
const PolyI = () => (
  <S size={16}>
    <path d="M.5 3q3-2.500 6 0 4 .5 8-1 1 4 0 8-3-1-6-1Q5 9 2 13q-1.500-1-1-4z" fill="#93b7d6" stroke="#6e97ba" />
  </S>
);

/* ---------- toolbar pieces ---------- */

const B = ({ children, on = false }: { children: React.ReactNode; on?: boolean }) => (
  <div className="flex h-full w-[33px] shrink-0 items-center justify-center">
    {on ? (
      <div className="flex h-[31px] w-[32px] items-center justify-center rounded-[3px] border border-[#a9a9a9] bg-[#dcdcdc]">{children}</div>
    ) : (
      children
    )}
  </div>
);
const Dots = () => (
  <svg width="5" height="18" className="shrink-0">
    {sq(9).map((_, i) => (
      <g key={i} fill="#b4b4b4">
        <rect x="0" y={i * 2} width="1" height="1" />
        <rect x="3" y={i * 2} width="1" height="1" />
      </g>
    ))}
  </svg>
);
const GripFirst = () => <div className="flex w-[11.500px] shrink-0 pl-[4px]"><Dots /></div>;
const Grip = ({ tight = false }: { tight?: boolean }) => (
  <div className={"flex shrink-0 " + (tight ? "w-[15px] pl-[8px]" : "w-[16px] pl-[8.500px]")}><Dots /></div>
);
const Sep = () => <div className="flex w-[7.500px] shrink-0 justify-center"><div className="h-[19px] w-px bg-[#cfcfcf]" /></div>;
const Arr = ({ dim = false }: { dim?: boolean }) => (
  <div className="flex w-[12px] shrink-0 items-center justify-center pr-[1px]">
    <svg width="8" height="5"><path d="M.5 .5h7L4 4.500z" fill={dim ? "#bdbdbd" : "#555"} /></svg>
  </div>
);
const Bar = ({ children, h }: { children: React.ReactNode; h: string }) => (
  <div className={"flex shrink-0 items-center border-b border-[#b2b2b2] bg-linear-to-b from-[#fafafa] to-[#ebebeb] " + h}>{children}</div>
);

const menu: [string, string, string, number][] = [
  ["Pro", "j", "eto", 50.500], ["", "E", "ditar", 40], ["", "V", "isão", 36], ["", "C", "amada", 54],
  ["", "C", "onfigurações", 97], ["", "C", "omplementos", 103.500], ["Vet", "o", "r", 37], ["", "R", "aster", 43],
  ["", "B", "ase de dados", 97], ["", "W", "eb", 31.500], ["", "M", "alha", 41], ["Pro", "c", "essar", 65.500], ["", "A", "juda", 38.500],
];

/* ---------- side panels ---------- */

const PanelTitle = ({ text, w }: { text: string; w: number }) => (
  <div className="flex h-[20px] shrink-0 items-center pr-[2px] pl-[3px]">
    <T w={w}>{text}</T>
    <div className="ml-auto flex gap-[3px]">
      <svg width="11" height="11" fill="none" stroke="#555">
        <rect x=".5" y=".5" width="10" height="10" rx="2" /><path d="M4.500 4.500v-2h4v4h-2M2.500 4.500h4v4h-4z" />
      </svg>
      <svg width="11" height="11" fill="none" stroke="#555">
        <rect x=".5" y=".5" width="10" height="10" rx="2" /><path d="M3 3l5 5M8 3L3 8" strokeWidth="1.800" />
      </svg>
    </div>
  </div>
);

const Tw = ({ open, ink = "#555" }: { open?: boolean | null; ink?: string }) => (
  <div className="flex w-[20px] shrink-0 justify-center">
    {open === true && <svg width="8" height="5"><path d="M.5 .3h7L4 4.500z" fill={ink} /></svg>}
    {open === false && <svg width="5" height="8"><path d="M.5 .5v7L4.700 4z" fill={ink} /></svg>}
  </div>
);

type Row = { t: string; w: number; lvl: number; open?: boolean; icon: React.ReactNode };
const tree: Row[] = [
  { t: "Favoritos", w: 61.500, lvl: 0, open: true, icon: <StarI /> },
  { t: "Module 2 - Data", w: 107, lvl: 1, open: false, icon: <FolderI /> },
  { t: "Favoritos Espaciais", w: 126.500, lvl: 0, open: false, icon: <BookI /> },
  { t: "Início", w: 35.500, lvl: 0, open: false, icon: <FolderI home /> },
  { t: "/", w: 6, lvl: 0, open: false, icon: <FolderI /> },
  { t: "GeoPackage", w: 83.500, lvl: 0, open: false, icon: <Scaled><GeoPkgShape /></Scaled> },
  { t: "SpatiaLite", w: 68, lvl: 0, icon: <Scaled><FeatherShape /></Scaled> },
  { t: "PostGIS", w: 52.500, lvl: 0, icon: <Elephant /> },
  { t: "MSSQL", w: 48.500, lvl: 0, icon: <MssqlI /> },
  { t: "DB2", w: 28.500, lvl: 0, icon: <Db2I /> },
  { t: "WMS/WMTS", w: 84.500, lvl: 0, open: true, icon: <WmsI /> },
  { t: "EOX Sentinel-2", w: 100.500, lvl: 1, open: false, icon: <ForkI /> },
  { t: "Risco de inundação LiPAD 100 anos", w: 237.500, lvl: 1, open: false, icon: <ForkI /> },
  { t: "Vector Tiles", w: 79.500, lvl: 0, icon: <GridI dark /> },
  { t: "XYZ Tiles", w: 62.500, lvl: 0, open: true, icon: <GridI /> },
  { t: "ESRI World Imagery", w: 133.500, lvl: 1, icon: <GridI /> },
  { t: "OpenStreetMap", w: 109.500, lvl: 1, icon: <GridI /> },
  { t: "PGP Basemap", w: 93.500, lvl: 1, icon: <GridI /> },
];

const Check = () => (
  <div className="flex h-[14px] w-[14px] shrink-0 items-center justify-center border border-[#b5b5b5] bg-white">
    <svg width="10" height="11" fill="none"><path d="M1.500 5.500l2.500 3.500L8.500 1" stroke="#111" strokeWidth="1.700" /></svg>
  </div>
);

const Slot = ({ children, w = "w-[25px]" }: { children: React.ReactNode; w?: string }) => (
  <div className={"flex shrink-0 items-center justify-center " + w}>{children}</div>
);

/* ---------- map ---------- */

const INK: Record<string, string> = {
  r: "#e22440", R: "#cc1464", o: "#e08c22", O: "#e04c22", t: "#d9ac66", s: "#de8078", y: "#e8e240", Y: "#c6ca34",
  l: "#8ee022", L: "#a8e476", g: "#3ade48", G: "#5fd488", m: "#2cdaa4", a: "#74e2d6", c: "#22c2d6", u: "#46a2dc",
  U: "#82acde", b: "#2c5ad6", B: "#1e14cc", v: "#6454d8", V: "#7a1ede", p: "#b03cda", P: "#ac78de", q: "#e020c4",
  Q: "#e464a4", k: "#d674e0", w: "#e2e088",
};

function hsv(h: number, s: number, v: number) {
  const f = (n: number) => {
    const k = (n + h / 60) % 6;
    return Math.round(255 * (v - v * s * Math.max(0, Math.min(k, 4 - k, 1))));
  };
  return `rgb(${f(5)},${f(3)},${f(1)})`;
}
function rng(seed: number) {
  let a = seed;
  return () => {
    a = (a + 0x6d2b79f5) | 0;
    let t = Math.imul(a ^ (a >>> 15), 1 | a);
    t = (t + Math.imul(t ^ (t >>> 7), 61 | t)) ^ t;
    return ((t ^ (t >>> 14)) >>> 0) / 4294967296;
  };
}

/** One strip of parcels: top, height, then runs of [first x, colour keys]. */
type Strip = { y: number; h: number; w?: number; runs: [number, string][] };

const mainData: Strip[] = [
  { y: 178, h: 27, w: 90, runs: [[1174, "Qm"]] },
  { y: 205, h: 26, runs: [[760, "QQQQ"], [1145, "lllgmGqucOkv"]] },
  { y: 231, h: 26, runs: [[700, "YYYYQQQ"], [1045, "QQGuwYQGpVugLPcc"]] },
  { y: 257, h: 26, runs: [[602, "sssrGPVQomQQ"], [1042, "vvpmQmPQskmYotVPP"]] },
  { y: 283, h: 27, runs: [[571, "VVoukbkYVLmoLL"], [1009, "oucVQBarqvLpbrupRkL"]] },
  { y: 310, h: 26, runs: [[588, "aaYPgoVwskOPguu"], [968, "LGmmRGlqbVqGwLlYRgumaa"]] },
  { y: 336, h: 26, runs: [[578, "rQQOGrgmGbPgswpB"], [990, "LskqQtrLaRGcQuYwmkcVs"]] },
  { y: 362, h: 26, runs: [[320, "uGPbbpckqQqaawQYspPLGRmlBB"], [996, "ssrqGkuOalqRsgBVsmgrr"]] },
  { y: 388, h: 26, runs: [[210, "VVVsvBGGcguGLLsqywoQtQgGQkRLPurucqQlbkGkgcuotRgmgOOvpkOr"]] },
  { y: 414, h: 26, runs: [[154, "alGYYYGvOqvvtRGsGGPUPswtPOtQotYmvurwQkcuPvbbYswrBpbBvglmQ"]] },
  { y: 440, h: 26, runs: [[114, "lLYmsPPkmqlGvmmLRgVurqbtrQgLgyPpgcmqVrPgoPGkqvmqPogkkLprrm"]] },
  { y: 466, h: 26, runs: [[48, "mbrPuuqqQLPUglgQYLLGuPaUkttgYGuuUOvkssscgqkGGgrVkLGGLvgPmsoGa"]] },
  { y: 492, h: 27, runs: [[48, "vLamvsBcwPGRULQQGmVvtgGQmcYLuggRUQQLqPbtPkQLcrkQtLotYogGOrma"]] },
  { y: 519, h: 26, runs: [[60, "PGUvuubtsOYryLmsoQmUpGycsvBsQatmYgLrtUQgPUacLgutsyYVcmoQPacbu"]] },
  { y: 545, h: 26, runs: [[101, "uYmgrPtGsqulLYotqQoYgBmuPqOuGvyosttLmyamkcPqgykLcuVPrOmpQvuLQw"]] },
  { y: 571, h: 26, runs: [[149, "sGGLvkPRRBbVVstUYqrqqaqOOLgoGaGvUYwRLQPkgcGuQOvrqPumYrVqpoYgg"]] },
  { y: 597, h: 26, runs: [[186, "aGYRbllpLkksbQVLqOrkGPPLqQkgmmaLwtkPQLRqBUucuUYrUmYYrVLGoO"]] },
  { y: 623, h: 26, runs: [[220, "YbGUlrmGGQOBPGRBakotygkqGPPqPpVqVgsYkPcckOqYuovrgPkqvYgYPPkL"]] },
  { y: 649, h: 14, w: 43.500, runs: [[244, "mGQrgOoGrVwuYcRQqqQlVBrootrggLaBR"]] },
  { y: 663, h: 26, runs: [[272, "LOatqrqkObmgrVLsrubqlYmvgPQcuVpkPYOoroLuqLbuVpqGbsLrgGrrr"]] },
  { y: 689, h: 26, runs: [[258, "cccc"], [365, "aGGcumGtvvgBqUbsRoUgQGYqBgGRpGwmaQPLoqYbvpgtlmGuQbwaPo"]] },
  { y: 715, h: 26, runs: [[401, "uQOuLLGoyBopGLotUumLubYqqwwoqPagYoQRvutskPGmqLsgbvbbmm"]] },
  { y: 741, h: 26, runs: [[403, "bb"], [455, "QVsGgQrgPlOmgQgOuVBPqrsoLgRtYkvugGPrpvoo"]] },
  { y: 767, h: 26, runs: [[464, "mmmVBBkPotgbbRVqcaagPlgrvbcmpYqgLwbLvPgg"]] },
  { y: 793, h: 26, runs: [[549, "sqOYYcBVqLYsPVGmyukqpvPPPuuuuPPqq"]] },
  { y: 819, h: 26, runs: [[564, "VotlwsvPGBBorrLuuuuuuUU"]] },
  { y: 845, h: 26, runs: [[594, "YYGPPqmPLvvvp"]] },
  { y: 871, h: 26, runs: [[594, "gLuotYgUvvv"]] },
  { y: 897, h: 30, runs: [[630, "gGpuu"]] },
  { y: 927, h: 28, runs: [[617, "bbRR"]] },
  { y: 955, h: 24, w: 90, runs: [[617, "b"]] },
];
const northData: Strip[] = [
  { y: 120, h: 28, w: 60, runs: [[1519, "ggVkkk"]] },
  { y: 146, h: 29, w: 46, runs: [[1519, "ggVV"], [1658, "coG"]] },
  { y: 174, h: 26, w: 27.500, runs: [[1452, "aaacobvkGaa"]] },
  { y: 200, h: 26, w: 25.800, runs: [[1448, "QQaLmVcpPVV"]] },
  { y: 226, h: 13, w: 50, runs: [[1462, "pggbuvk"]] },
  { y: 239, h: 26, w: 27, runs: [[1457, "gggoLLLuQqv"]] },
  { y: 265, h: 26, w: 60, runs: [[1462, "ggQQQ"]] },
];
const westData: Strip[] = [
  { y: 830, h: 28, w: 80, runs: [[377, "sgg"]] },
  { y: 858, h: 22, w: 31.500, runs: [[372, "llQaLQQmm"]] },
  { y: 880, h: 24, w: 37, runs: [[370, "Yqmcaugu"]] },
  { y: 904, h: 36, w: 100, runs: [[560, "a"]] },
];
const patches: [number, number, number, number, string][] = [
  [165, 388, 45, 26, "Q"], [245, 362, 40, 26, "g"], [285, 362, 35, 26, "g"],
  [400, 336, 49, 26, "b"], [449, 336, 51, 26, "k"], [500, 336, 78, 26, "B"],
  [790, 220, 85, 24, "Q"], [700, 244, 108, 13, "Y"], [808, 244, 66, 13, "t"],
  [1268, 180, 122, 25, "m"],
];

function Parcels({ data, seed }: { data: Strip[]; seed: number }) {
  const r = rng(seed);
  const out: React.ReactNode[] = [];
  data.forEach((s) => {
    const w = s.w ?? 25.900;
    s.runs.forEach(([x0, keys], k) => {
      const last = k === s.runs.length - 1;
      const n = last ? keys.length + 10 : Math.min(keys.length, Math.ceil((s.runs[k + 1][0] - x0) / w));
      for (let j = k ? 0 : -3; j < n; j++) {
        const base = INK[keys[j]];
        const fill = base ?? hsv(r() * 360, 0.4 + r() * 0.55, 0.8 + r() * 0.15);
        out.push(<rect key={s.y + "_" + k + "_" + j} x={x0 + j * w} y={s.y} width={w} height={s.h} fill={fill} />);
      }
    });
  });
  return <g stroke="#262626" strokeWidth="3">{out}</g>;
}

const MAIN =
  "M40 475L50 468 62 472 68 463 74 470 80 450 88 454 95 448 100 442 112 448 145 438 160 430 162 412 157 402 180 398 205 400 225 388 250 386 256 376 265 368 280 376 290 366 302 364 315 362 345 360 355 362 380 364 410 358 425 346 442 338 500 358 575 346 583 353 593 292 660 266 700 256 857 226 864 246 875 268 942 322 990 307" +
  "L1030 287 1045 270 1058 250 1075 244 1090 240 1130 230 1145 218 1170 205 1190 198 1260 196 1350 188 1365 203 1380 206 1390 214 1425 210 1440 220 1450 250 1470 275 1495 300 1518 308 1530 350 1545 372 1560 388 1568 402 1582 396 1588 402 1570 430 1584 440 1600 470 1650 455 1672 462 1690 464 1705 485 1730 493 1732 516 1722 518 1718 530 1702 524 1712 545 1705 570 1710 590 1698 602 1680 610 1685 622 1710 627 1758 625 1725 638 1733 650 1735 665 1700 670 1680 680 1665 692 1655 712 1668 727 1650 738 1625 730 1560 732 1540 745 1508 768 1480 764 1450 765 1425 772 1410 782 1392 790 1395 808 1350 808 1290 797 1160 795 1060 806 960 826" +
  "L905 847 880 853 850 855 828 867 820 882 805 896 735 900 722 918 702 928 695 945 680 960 692 970 680 974 650 972 625 966 642 957 643 935 655 920 610 885 600 865 555 840 557 822 540 816 520 805 505 790 490 775 452 767 448 758 432 756 415 760 410 742 392 722 370 700 350 697 335 710 320 725 310 712 290 702 280 684 270 670 254 664 244 670 240 652 225 640 200 617 180 602 165 585 130 568 110 558 90 552 75 538 60 535 38 515 48 505 42 492z";
const WEST = "M377 906L382 872 430 858 530 842 560 840 600 865 655 915 645 935 610 915 570 905 480 900z";
const NORTH =
  "M1457 220L1480 185 1505 175 1540 165 1555 158 1563 143 1580 148 1592 146 1603 158 1615 175 1632 173 1660 178 1658 150 1695 145 1698 132 1705 125 1710 145 1718 143 1730 126 1746 128 1750 140 1748 155 1725 165 1705 180 1693 196 1695 230 1700 250 1690 262 1675 285 1665 270 1662 250 1640 248 1600 240 1560 250 1540 275 1522 287 1500 275 1492 255 1470 240z";

const islets: [string, string][] = [
  ["M1867 58l5-5 8-6 14 6-3 14-12 6 4 16 12-4-4 12-14 12-14-1 12-11 2-12-2-14-7-8z", "#e0709c"],
  ["M1844 66l8-5 8 5-7 9-8-2z", "#c9d56a"],
  ["M1822 40l8-2 5 4-9 3z", "#8a3d4b"],
  ["M1737 104l10 8 14 2-8 9-14 0z", "#e06060"],
  ["M1515 298l12 5 25-7 18 6 8 8-4 5 -14 0-6 6-34 0z", "#7a12d0"],
  ["M1560 305q18 0 17 18-4 8-10 0 2-8-8-4z", "#7a12d0"],
  ["M1522 318l34 0-8 14 4 12 14 12-32 2-8-16z", "#5b63dd"],
  ["M1535 360l28-4 44-1 4 8-30 2-10 4-34-3z", "#d89560"],
  ["M1543 372l45 1 6 12-8 10-34-4z", "#e965dd"],
  ["M1545 388l12 14 8-6 22 8-16 18 -10-8z", "#e8451f"],
  ["M1588 398l12-10 25 8-22 20-14-2z", "#b6cc63"],
  ["M1574 428l24-12 6 6-24 18z", "#d86bb0"],
  ["M1694 463l12-3 14 10-18 4z", "#e0302c"],
  ["M1722 517l15-2 0 9-10 3z", "#6a2fa0"],
  ["M1720 613l24-14 6-8 5 4-4 18 8 6-30 4-10-3z", "#9a70c8"],
  ["M1711 630l48-4-30 12-20 3z", "#7cd070"],
  ["M1717 650l17-2 2 18-14-4z", "#d81b78"],
  ["M1756 660l8-4 3 6-8 9z", "#3ca0b0"],
  ["M1688 252l18 2 4-6 17 2-6 14-12 17-8-4 6-12-18-2z", "#5b63c8"],
  ["M1700 125l-8 18 20 2-4-20zM1727 126l22 2 0 14-26 3z", "#d77bea"],
  ["M1723 228l8-3 3 6-8 4z", "#d8542a"],
  ["M1606 840l12-3 4 5-8 4z", "#c0308a"],
  ["M1602 875l16-4 18-12 8-14-2 16-18 16-18 8z", "#b01868"],
  ["M1640 840l8-2 1 8-8 1z", "#2aa090"],
  ["M1624 970l8-9 14 3 0 10-8 7-16-2z", "#25c818"],
  ["M1758 940l10 6 9 12-10 0-8-9z", "#c08a28"],
  ["M785 944l8-14 10 12-4 6z", "#e04a2a"],
  ["M898 858l8-4 6 6-4 9z", "#d8cc38"],
  ["M62 538l6-4 7 3-6 9z", "#d85858"],
  ["M583 857l20 0 14 14-8 12-26-14z", "#d0b020"],
  ["M546 834l16 8 26 18 22 14 8 14-18-2-22-10-26-10-8-14z", "#14d8b8"],
  ["M1338 872l14-2-3 5-10 1z", "#208aa8"],
  ["M1354 857l7-4 0 9-6 1z", "#20a858"],
  ["M1414 849l9-2-2 6z", "#b060a0"],
  ["M654 985l8 4-4 4-4-2z", "#28a0a8"],
];
const specks: [number, number][] = [
  [1716, 99], [1793, 125], [1800, 126], [1791, 140], [1799, 143], [1883, 128], [1763, 158], [1750, 175], [1762, 165], [1760, 155],
  [1888, 165], [1898, 161], [1840, 184], [1836, 190], [1866, 184], [1847, 203], [1870, 200], [1836, 210], [1850, 207], [1714, 193], [1745, 192],
  [1732, 250], [1698, 300], [1474, 263], [1484, 262], [1636, 442], [1694, 433], [1700, 432], [1604, 444], [1683, 462], [1768, 580],
  [1312, 870], [1328, 893], [1344, 860], [1669, 832], [640, 989], [800, 910], [398, 750], [276, 713], [282, 711], [1860, 104], [1586, 448],
];

const MapDrawing = () => (
  <svg className="h-full w-full" fill="none">
    <defs>
      <clipPath id="m"><path d={MAIN} /></clipPath>
      <clipPath id="w"><path d={WEST} /></clipPath>
      <clipPath id="n"><path d={NORTH} /></clipPath>
    </defs>
    <g transform="translate(269 160) scale(.33333)" strokeLinejoin="round">
      <g clipPath="url(#w)"><Parcels data={westData} seed={5} /></g>
      <g clipPath="url(#m)">
        <Parcels data={mainData} seed={42} />
        <g stroke="#262626" strokeWidth="3">
          {patches.map(([x, y, w, h, k]) => <rect key={x + "_" + y} x={x} y={y} width={w} height={h} fill={INK[k]} />)}
        </g>
      </g>
      <g clipPath="url(#n)"><Parcels data={northData} seed={11} /></g>
      <g stroke="#232323" strokeWidth="3"><path d={WEST} /><path d={MAIN} /><path d={NORTH} /></g>
      <g stroke="#232323" strokeWidth="2.500">{islets.map(([d, c], i) => <path key={i} d={d} fill={c} />)}</g>
      <path d="M612 884l18 10 20 22-1 9-8-8-22-22z" fill="#fff" stroke="#232323" strokeWidth="2.500" />
      <g fill="#232323">{specks.map(([x, y], i) => <rect key={i} x={x - 3} y={y - 2} width={i % 3 ? 5 : 8} height={i % 2 ? 5 : 4} />)}</g>
    </g>
  </svg>
);

/* ---------- status bar ---------- */

const Field = ({ children, className = "" }: { children: React.ReactNode; className?: string }) => (
  <div className={"flex h-[24px] shrink-0 items-center rounded-[3px] border border-[#a6a6a6] bg-white " + className}>{children}</div>
);
const Spin = () => (
  <div className="ml-auto flex h-full w-[15px] flex-col items-center justify-center gap-[5px] rounded-r-[3px] border-l border-[#b5b5b5] bg-[#f4f4f4]">
    <svg width="8" height="4"><path d="M.5 4h7L4 0z" fill="#555" /></svg>
    <svg width="8" height="4"><path d="M.5 0h7L4 4z" fill="#555" /></svg>
  </div>
);

export default function App() {
  return (
    <div className="flex h-[836px] w-[1599px] flex-col overflow-hidden bg-[#eeeeee] font-['Ubuntu','Noto_Sans','Open_Sans',sans-serif] text-[14.500px] leading-[19px] text-black">
      <div className="flex h-[22px] shrink-0 items-center gap-[14.800px] border-b border-[#cccccc] pl-[9px]">
        {menu.map(([a, b, c, w]) => (
          <T key={a + b + c} w={w}>
            {a}<span className="underline decoration-1 underline-offset-2 [text-decoration-skip-ink:none]">{b}</span>{c}
          </T>
        ))}
      </div>

      <Bar h="h-[39px]">
        <GripFirst />
        <B><NewDoc /></B><B><OpenFolder /></B><B><Save /></B><B><Layout /></B><B><Wrench /></B><B><Style /></B>
        <Grip />
        <B on><Hand /></B><B><Pan /></B><B><ZoomIn /></B><B><ZoomOut /></B><B><ZoomFull /></B><B><ZoomSel /></B><B><ZoomLayer /></B>
        <B><ZoomNative /></B><B><ZoomLast /></B><B><ZoomNext /></B>
        <B><MapView tail={<Star />} /></B><B><Map3D /></B><B><NewBookmark /></B>
        <B><MapView tail={<path d="M12.500 1.500h4.500v10l-2.200-2-2.300 2z" fill="#6e97c9" stroke="#3f6593" />} /></B>
        <B><Clock /></B><B><Refresh /></B>
        <Grip />
        <B><Identify /></B><B><Table /></B><B><Abacus /></B><B><Gear /></B><B><Sigma /></B><B><Ruler /></B><Arr />
        <B><MapTip /></B><B><Action /></B><Arr dim /><B><TextNote /></B><Arr />
      </Bar>

      <Bar h="h-[39px]">
        <GripFirst />
        <B><DataSource /></B><B><GeoPkg /></B><B><NewVector /></B><B><Feather /></B><B><Chip /></B>
        <Sep /><B><VBox /></B><Sep /><Grip tight />
        <B><Pencils /></B><B><PencilIcon /></B><B><SaveEdits /></B><B><AddPoly /></B><B><Vertex /></B><Arr dim />
        <B><MultiEdit /></B><B><Trash /></B><B><Cut /></B><B><Copy /></B><B><Paste /></B><B><Undo /></B><B><Redo /></B>
        <Grip tight />
        <B><AbcYellow /></B><B><Diagram /></B><Sep /><B><AbPin /></B><B><AbcRed /></B><Sep />
        <B><DimTag k={0} /></B><B><DimTag k={1} /></B><B><DimTag k={2} /></B><B><DimTag k={3} /></B><B><DimTag k={4} /></B>
        <Grip />
        <B><GlobeAdd /></B><B><GlobeFind /></B><B><GlobeBino /></B>
        <Grip />
        <B><Python /></B><B><Earth /></B><B><Swipe /></B><B><InfoGreen /></B><B><Bowtie /></B>
        <Grip /><B><HelpBook /></B><Grip /><B><TopoCheck /></B><B><TableSync /></B>
      </Bar>

      <Bar h="h-[38px] pt-[1px]">
        <GripFirst />
        <B><Sel /></B><Arr /><B><SelForm /></B><Arr /><B><Deselect /></B><Arr /><B><SelLoc /></B>
        <Grip /><div className="w-px" /><Grip /><B><OsmFind /></B><B><OsmMap /></B>
      </Bar>

      <div className="flex min-h-0 flex-1">
        <div className="flex w-[404px] shrink-0 flex-col">
          <PanelTitle text="Navegador" w={74} />
          <div className="flex h-[31px] shrink-0 items-center pb-[2px] pl-[2px]">
            <Slot><AddLayerI /></Slot>
            <Slot><Scaled><RefreshShape /></Scaled></Slot>
            <Slot><FunnelI /></Slot><Slot><TreeArrow /></Slot><Slot><InfoI /></Slot>
          </div>
          <div className="flex h-[347px] shrink-0 border-y border-r border-[#ababab] bg-white">
            <div className="min-w-0 flex-1 overflow-hidden">
              {tree.map((r) => (
                <div key={r.t} className={"flex h-[19px] items-center " + (r.lvl ? "pl-[20px]" : "")}>
                  <Tw open={r.open} />
                  <div className="mr-[6px] ml-[3px] flex w-[16px]">{r.icon}</div>
                  <T w={r.w}>{r.t}</T>
                </div>
              ))}
              <div className="mt-[2px] ml-[27px] h-[8px] w-[8px] rounded-t-full bg-[#4a6484]" />
            </div>
            <div className="flex w-[14px] shrink-0 flex-col border-l border-[#b5b5b5] bg-[#dfdfdf]">
              <div className="flex h-[14px] items-center justify-center border-b border-[#b5b5b5] bg-[#fafafa]">
                <svg width="8" height="4"><path d="M.5 4h7L4 0z" fill="#444" /></svg>
              </div>
              <div className="h-[238px] border-b border-[#b5b5b5] bg-linear-to-r from-[#f4f4f4] to-white" />
              <div className="mt-auto flex h-[14px] items-center justify-center border-t border-[#b5b5b5] bg-[#fafafa]">
                <svg width="8" height="4"><path d="M.5 0h7L4 4z" fill="#444" /></svg>
              </div>
            </div>
          </div>
          <div className="flex h-[5px] shrink-0 items-center justify-center">
            <div className="h-px w-[17px] border-t border-dotted border-[#999]" />
          </div>
          <PanelTitle text="Camadas" w={61} />
          <div className="flex h-[31px] shrink-0 items-center pb-[2px] pl-[2px]">
            <Slot><BrushI /></Slot><Slot><GroupI /></Slot><Slot><EyeI /></Slot><Slot><FunnelI /></Slot><Slot><EpsI /></Slot>
            <Slot w="w-[12px]"><svg width="8" height="5"><path d="M.5 .5h7L4 4.500z" fill="#444" /></svg></Slot>
            <Slot><TreeArrow down /></Slot><Slot><TreeArrow /></Slot><Slot><AddLayerI minus /></Slot>
          </div>
          <div className="min-h-0 flex-1 border-y border-r border-[#ababab] bg-white font-bold">
            <div className="flex h-[19px] items-center bg-[#308cc6] text-[#dcebf6]">
              <Tw open={false} ink="#0d2c40" />
              <div className="ml-[3px]"><Check /></div>
              <div className="mr-[3px] ml-[6px] flex"><PolyI /></div>
              <div className="flex h-full flex-1 items-center border border-[#2675a8] pl-[2px]">
                <T w={247} className="h-[17px] border-b border-[#dcebf6] leading-[17px]">Divided Polygon rj_polygonDivider</T>
              </div>
            </div>
            <div className="flex h-[19px] items-center">
              <div className="ml-[23px]"><Check /></div>
              <div className="mr-[6px] ml-[6px] h-[16px] w-[16px] border border-[#7d2424] bg-[#c43c39]" />
              <T w={154.500}>module9 br_rj_capital</T>
            </div>
          </div>
        </div>
        <div className="flex w-[6px] shrink-0 items-center justify-center">
          <div className="h-[17px] w-px border-l border-dotted border-[#999]" />
        </div>
        <div className="mt-[1px] min-w-0 flex-1 border border-[#ababab] bg-white">
          <MapDrawing />
        </div>
      </div>

      <div className="flex h-[31px] shrink-0 items-center pb-[1px] pl-[3px] text-[13px]">
        <Field className="w-[360px] pl-[7px]">
          <svg width="15" height="15" fill="none" stroke="#888" strokeWidth="1.400"><circle cx="6" cy="6" r="4.300" /><path d="M9.200 9.200l4.500 4.500" /></svg>
          <div className="pl-[7px] text-[14.500px] text-[#b4b4b4] italic"><T w={198}>Escreva para localizar (Ctrl+K)</T></div>
        </Field>
        <div className="ml-[341px] flex items-center">
          <T w={66}>Coordenada</T>
          <Field className="ml-[4px] w-[110px] pl-[8px]"><T w={91}>669998,7438669</T></Field>
          <svg width="18" height="18" viewBox="0 0 18 18" fill="none" stroke="#222" className="ml-[3px]">
            <path d="M2 4l3-2 3 1M2 4l1 5 4 5 4 1M4 4l6 7M6 3l6 6M8 3l6 6-1 4M3 6l5 6M1 7l3-2M12 5l4-3M14 8l1 5-2 3" strokeWidth="1.100" /><circle cx="10.500" cy="12.500" r="2.500" fill="#fff" /><path d="M2 13l2 1" />
          </svg>
          <div className="ml-[12px]"><T w={34}>Escala</T></div>
          <Field className="ml-[3px] w-[97px] pl-[4px]">
            <T w={50}>1:436333</T>
            <div className="ml-auto flex h-full w-[20px] items-center justify-center rounded-r-[3px] border-l border-[#b5b5b5] bg-[#f6f6f6]">
              <svg width="8" height="5"><path d="M.5 .5h7L4 4.500z" fill="#555" /></svg>
            </div>
          </Field>
          <svg width="13" height="16" fill="none" className="ml-[11px]">
            <path d="M3.500 7V4.500a3 3 0 0 1 6 0V7" stroke="#999" strokeWidth="1.500" /><rect x=".5" y="6.500" width="12" height="9" rx="1" fill="#5e5e5e" />
          </svg>
          <div className="ml-[9px]"><T w={26}>Lupa</T></div>
          <Field className="ml-[4px] w-[98px] pl-[5px]"><T w={30}>100%</T><Spin /></Field>
          <div className="ml-[9px]"><T w={44}>Rotação</T></div>
          <Field className="ml-[10px] w-[94px] pl-[4px]"><T w={24}>0.0 °</T><Spin /></Field>
          <div className="mr-[5px] ml-[6px]"><Check /></div>
          <T w={59}>Renderizar</T>
          <svg width="15" height="15" viewBox="0 0 15 15" fill="none" stroke="#777" className="ml-[16px]">
            <path d="M.7 7.500L4 2.500q3.500-2.500 7 0l3.300 5-3.300 5q-3.500 2.500-7 0z" fill="#b5b5b5" /><path d="M.7 7.500h13.600M7.500 1v13M3 4.500h9M3 10.500h9M5 2.500q-2 5 0 10M10 2.500q2 5 0 10" strokeWidth=".8" />
          </svg>
          <div className="ml-[3px]"><T w={65}>EPSG:31983</T></div>
          <svg width="17" height="15" className="ml-[23px]">
            <path d="M5 1h7q4.500 0 4.500 5.200 0 5-3 5.300l.5 3-4.500-3H5Q.5 11.500.5 6.200 .5 1 5 1z" fill="#666" />
            <g fill="#fff"><circle cx="4.800" cy="6" r="1.200" /><circle cx="8.500" cy="6" r="1.200" /><circle cx="12.200" cy="6" r="1.200" /></g>
          </svg>
        </div>
      </div>
    </div>
  );
}
